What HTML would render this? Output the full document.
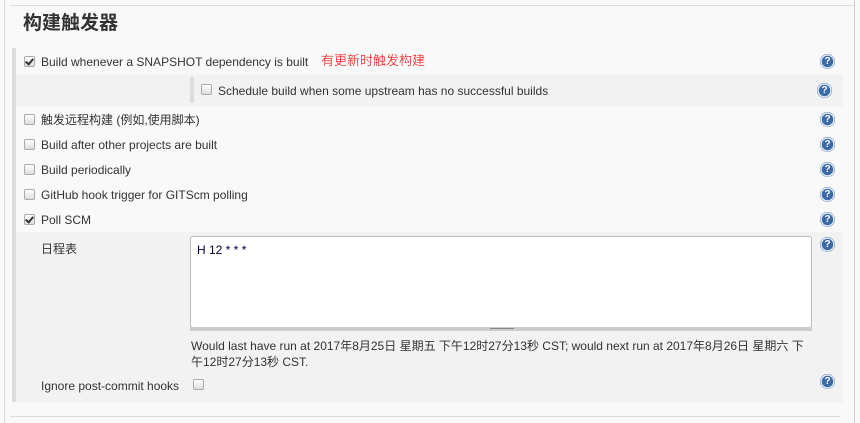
<!DOCTYPE html>
<html><head><meta charset="utf-8"><style>
body{margin:0;width:860px;height:423px;background:#f9f9f9;position:relative;overflow:hidden;font-family:"Liberation Sans","Noto Sans CJK SC",sans-serif;font-size:12px;color:#333}
.a{position:absolute}
.t{position:absolute;white-space:nowrap;line-height:14px}
.cb{position:absolute;width:9px;height:9px;border:1px solid #aaa;border-radius:2px;background:linear-gradient(#fff,#ddd)}
.cb.on::after{content:"";position:absolute;left:2px;top:0px;width:3px;height:6px;border:solid #333;border-width:0 2px 2px 0;transform:rotate(40deg)}
.h{position:absolute;width:15px;height:15px;border-radius:50%;background:radial-gradient(circle,#3a6aa8 52%,#e8eef6 56%,#e8eef6 64%,#3a6aa8 70%);color:#fff;font:bold 10px/15px "Liberation Sans",sans-serif;text-align:center}
</style></head><body>
<div class="a" style="left:4px;top:0;width:1px;height:423px;background:#ddd"></div>
<div class="a" style="left:854px;top:0;width:1px;height:423px;background:#ccc"></div>
<div class="a" style="left:10px;top:5px;width:844px;height:1px;background:#ddd"></div>
<div class="a" style="left:10px;top:416px;width:830px;height:1px;background:#ddd"></div>
<div class="t" style="left:23px;top:12px;font-size:19px;line-height:24px;font-weight:bold;color:#333">构建触发器</div>
<div class="a" style="left:12px;top:48px;width:4px;height:354px;background:#ddd"></div>
<div class="a" style="left:16px;top:74px;width:827px;height:32px;background:#f2f2f2"></div>
<div class="a" style="left:190px;top:77px;width:4px;height:26px;background:#ddd"></div>
<div class="a" style="left:16px;top:232px;width:827px;height:170px;background:#f2f2f2"></div>

<div class="cb on" style="left:24px;top:56px"></div><div class="t" style="left:41px;top:55px">Build whenever a SNAPSHOT dependency is built</div>
<div class="t" style="left:321px;top:54px;color:#e00;font-size:13px;font-weight:300">有更新时触发构建</div>
<div class="cb" style="left:201px;top:84px"></div><div class="t" style="left:218px;top:84px">Schedule build when some upstream has no successful builds</div>
<div class="cb" style="left:24px;top:114px"></div><div class="t" style="left:41px;top:113px">触发远程构建 (例如,使用脚本)</div>
<div class="cb" style="left:24px;top:139px"></div><div class="t" style="left:41px;top:138px">Build after other projects are built</div>
<div class="cb" style="left:24px;top:164px"></div><div class="t" style="left:41px;top:163px">Build periodically</div>
<div class="cb" style="left:24px;top:189px"></div><div class="t" style="left:41px;top:188px">GitHub hook trigger for GITScm polling</div>
<div class="cb on" style="left:24px;top:214px"></div><div class="t" style="left:41px;top:213px">Poll SCM</div>
<div class="t" style="left:41px;top:242px">日程表</div>
<div class="a" style="left:190px;top:236px;width:620px;height:90px;background:#fff;border:1px solid #bbb;border-radius:3px"></div>
<div class="a" style="left:190px;top:327px;width:622px;height:4px;background:#ccc"></div>
<div class="a" style="left:490px;top:328px;width:24px;height:1px;background:#888"></div>
<div class="t" style="left:197px;top:243px;color:#003">H 12 * * *</div>
<div class="t" style="left:191px;top:338px;line-height:16px">Would last have run at 2017年8月25日 星期五 下午12时27分13秒 CST; would next run at 2017年8月26日 星期六 下<br>午12时27分13秒 CST.</div>
<div class="t" style="left:41px;top:379px">Ignore post-commit hooks</div>
<div class="cb" style="left:193px;top:379px"></div>

<div class="h" style="left:820px;top:54px">?</div>
<div class="h" style="left:817px;top:83px">?</div>
<div class="h" style="left:820px;top:112px">?</div>
<div class="h" style="left:820px;top:137px">?</div>
<div class="h" style="left:820px;top:162px">?</div>
<div class="h" style="left:820px;top:187px">?</div>
<div class="h" style="left:820px;top:212px">?</div>
<div class="h" style="left:820px;top:237px">?</div>
<div class="h" style="left:820px;top:374px">?</div>
</body></html>
